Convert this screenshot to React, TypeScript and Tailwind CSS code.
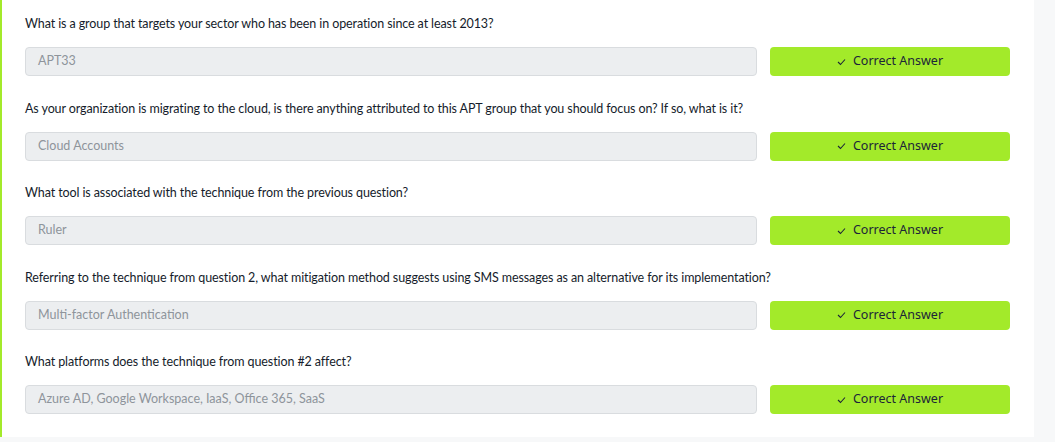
const questions = [
  {
    q: "What is a group that targets your sector who has been in operation since at least 2013?",
    a: "APT33",
  },
  {
    q: "As your organization is migrating to the cloud, is there anything attributed to this APT group that you should focus on? If so, what is it?",
    a: "Cloud Accounts",
  },
  {
    q: "What tool is associated with the technique from the previous question?",
    a: "Ruler",
  },
  {
    q: "Referring to the technique from question 2, what mitigation method suggests using SMS messages as an alternative for its implementation?",
    a: "Multi-factor Authentication",
  },
  {
    q: "What platforms does the technique from question #2 affect?",
    a: "Azure AD, Google Workspace, IaaS, Office 365, SaaS",
  },
];

function Check() {
  return (
    <svg width="9" height="8" viewBox="0 0 9 8" fill="none" className="mr-[7px]">
      <path d="M1 4 L3.5 6.5 L8 1.5" stroke="#1c2538" strokeWidth="1.1" />
    </svg>
  );
}

export default function App() {
  return (
    <div className="h-[442px] w-[1055px] bg-[#f7f8f9] font-['Lato',sans-serif]">
      <div className="w-[1034px] h-[437px] border-l-2 border-[#a3ea2a] bg-white pl-[23px] pr-[24px] pt-[14px]">
        {questions.map((item) => (
          <div key={item.q} className="h-[84.5px]">
            <p className="text-[12.5px] leading-[20px] tracking-[-0.1px] text-[#151c2b]">{item.q}</p>
            <div className="mt-[13px] flex h-[29px] gap-[13px]">
              <div className="flex flex-1 items-center rounded-[4px] border border-[#d9dcdf] bg-[#eceef0] px-[12px] text-[12.5px] text-[#8e949b]">
                {item.a}
              </div>
              <button className="flex w-[240px] items-center justify-center rounded-[4px] bg-[#a3ea2a] font-['Noto_Sans',sans-serif] text-[12.5px] text-[#1c2538]">
                <Check />
                Correct Answer
              </button>
            </div>
          </div>
        ))}
      </div>
    </div>
  );
}
